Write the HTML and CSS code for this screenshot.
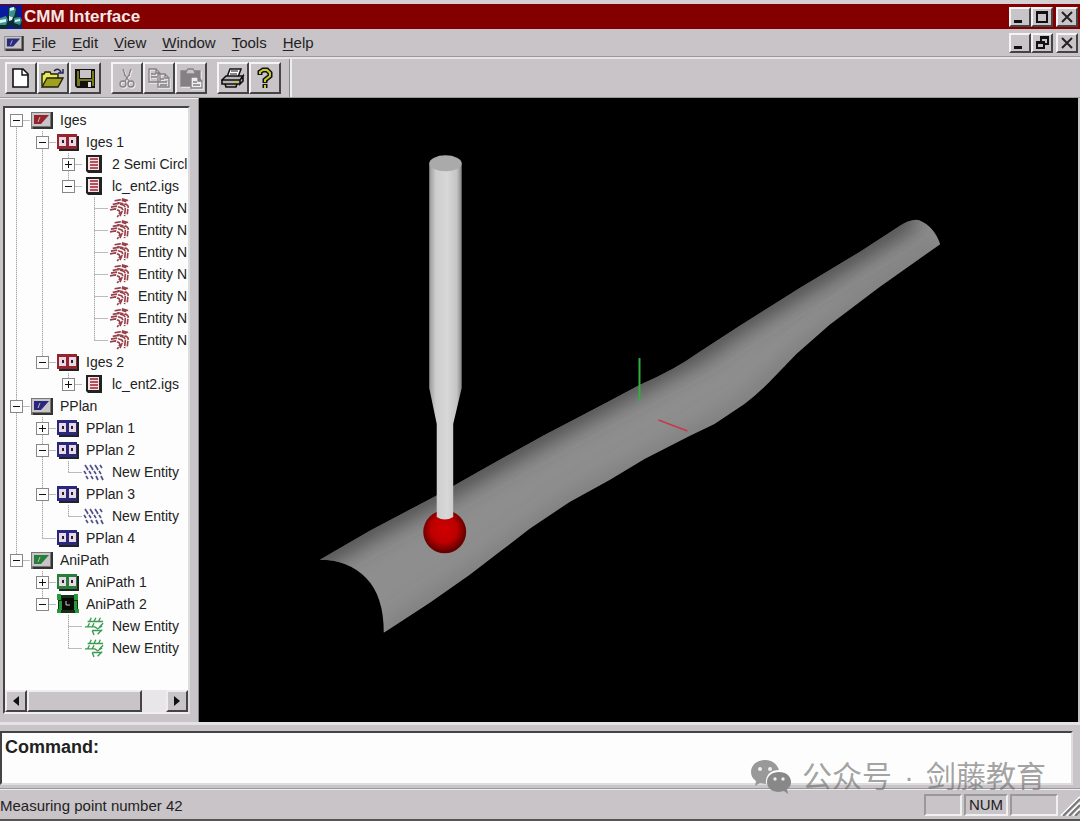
FILE: index.html
```
<!DOCTYPE html>
<html lang="en">
<head>
	<meta charset="utf-8">
	<title>CMM Interface</title>
	<link rel="stylesheet" href="styles.css">
</head>
<body>
	<!-- icon shapes -->
	<svg class="defs" width="0" height="0">
		<symbol id="root" viewBox="0 0 22 18">
			<path fill="#777" d="M0 1h22v17H0z"/><path fill="#c8c4c8" d="M1 2h18v13H1z"/>
			<path fill="#333" d="M20 1h2v17H2v-2h18z"/><path fill="currentColor" d="M3 4h15l-8 9H3z"/>
			<path stroke="#bbb" d="M9 6l-2 5" fill="none"/>
		</symbol>
		<symbol id="group" viewBox="0 0 22 18">
			<path fill="#222" d="M2 3h20v15H2z"/><path fill="currentColor" d="M0 1h20v15H0z"/>
			<path class="pane" d="M2 4h7v9H2zM12 4h7v9h-7z"/><path fill="#222" d="M5 7h2v3H5zM14 7h2v3h-2z"/>
		</symbol>
		<symbol id="doc" viewBox="0 0 22 20">
			<path fill="#222" d="M3 1h16v18H5l-2-2z"/><path fill="#f2e4e4" d="M5 3h11v13H5z"/>
			<path stroke="#a02030" stroke-width="1.6" d="M7 5h8M7 8h8M7 11h8M7 14h8"/>
		</symbol>
		<symbol id="surf" viewBox="0 0 22 22">
			<g fill="none" stroke="#98404a" stroke-width="1.8">
				<path stroke-dasharray="7 1" d="M3 7l6-1 6 2 2 2-1 10M5 3l6-1 7 2M8 5l10 2 2 2-1 9M1 10l6-1 6 2 1 2-3 7M0 13l6-1 4 2 1 2-3 5M13 1l8 2"/>
			</g>
		</symbol>
		<symbol id="points" viewBox="0 0 22 20">
			<path fill="none" stroke="#505088" stroke-width="1.7" d="M2 3l2 3M7 3l2 3M12 3l2 3M17 3l2 3M1 9l2 3M6 9l2 3M11 9l2 3M16 9l2 3M3 14l2 3M8 14l2 3M13 14l2 4M18 14l2 4M4 6l1 2M9 6l1 2M14 6l1 2"/>
		</symbol>
		<symbol id="path" viewBox="0 0 22 22">
			<path fill="none" stroke="#3a9a50" stroke-width="1.5" d="M4 6h17M6 6l2-4M11 6l2-4M16 6l2-4M1 12h11l3 2 5-3M4 12l2-4M9 12l2-4M17 12l4-4M9 16h11M9 16l2 5M15 20l5-5"/>
		</symbol>
		<symbol id="active" viewBox="0 0 22 20">
			<path fill="#163016" d="M1 1h20v18H1z"/><path fill="#279a3c" d="M0 0h4v6H0zM17 0h4v6h-4zM2 7h3v9H2zM17 7h3v9h-3zM0 15h4v4H0zM18 15h4v4h-4z"/>
			<path fill="#080808" d="M5 4h12v12H5z"/><path stroke="#ccc" fill="none" d="M9 7v4h4"/>
		</symbol>
	</svg>

	<div class="window">
		<header class="titlebar">
			<svg class="app-icon" viewBox="0 0 22 24">
				<path fill="#0a1aa0" d="M0 0h22v24H0z"/>
				<path fill="#0c2c34" d="M8 3l7-2 2 3v7l5 3v7l-6 3-5-4-5 4H0v-9l8-4z"/>
				<path fill="#3c9090" d="M9 3l5-1 2 2-2 8-5-1zM0 13l6-2 2 4-2 5H0zM14 13l6-1 2 3-2 5-6-2z"/>
				<path fill="#d8f4f4" d="M10 3l4-1v3l-4 1zM0 15l6-1v3l-6 1zM9 11l4 1-1 3-3 1zM15 15l5-1v2l-5 1z"/>
			</svg>
			<h1 class="title">CMM Interface</h1>
			<div class="caption-buttons">
				<button class="caption" aria-label="Minimize"><svg viewBox="0 0 16 14"><path d="M2 10h8v3H2z"/></svg></button>
				<button class="caption" aria-label="Maximize"><svg viewBox="0 0 16 14"><path fill-rule="evenodd" d="M2 1h12v12H2zM4 4v7h8V4z"/></svg></button>
				<button class="caption close" aria-label="Close"><svg viewBox="0 0 16 14"><path class="cross" d="M3 2l10 10M13 2L3 12"/></svg></button>
			</div>
		</header>

		<nav class="menubar">
			<svg class="doc-icon blue" viewBox="0 0 22 18"><use href="#root"/></svg>
			<button class="menu"><u>F</u>ile</button>
			<button class="menu"><u>E</u>dit</button>
			<button class="menu"><u>V</u>iew</button>
			<button class="menu"><u>W</u>indow</button>
			<button class="menu"><u>T</u>ools</button>
			<button class="menu"><u>H</u>elp</button>
			<div class="caption-buttons">
				<button class="caption" aria-label="Minimize document"><svg viewBox="0 0 16 14"><path d="M2 10h8v3H2z"/></svg></button>
				<button class="caption" aria-label="Restore document"><svg viewBox="0 0 16 14"><path fill-rule="evenodd" d="M6 0h9v9h-4v4H2V5h4zM8 3v2h3v2h2V3zM4 8v3h5V8z"/></svg></button>
				<button class="caption close" aria-label="Close document"><svg viewBox="0 0 16 14"><path class="cross" d="M3 2l10 10M13 2L3 12"/></svg></button>
			</div>
		</nav>

		<div class="toolbar">
			<div class="tools">
				<button class="tool" aria-label="New"><svg viewBox="0 0 24 22"><path fill="#fff" stroke="#111" stroke-width="1.6" d="M4 2h10l5 5v13H4z"/><path fill="none" stroke="#111" stroke-width="1.4" d="M13 2v6h6"/></svg></button>
				<button class="tool" aria-label="Open"><svg viewBox="0 0 24 22"><path fill="#e8e860" stroke="#222200" stroke-width="1.4" d="M1 19V7h2l1-2h5l1 2h7v4"/><path fill="#a0a020" stroke="#222200" stroke-width="1.4" d="M1 20l5-9h16l-5 9z"/><path fill="none" stroke="#222250" stroke-width="1.5" d="M13 4q4-4 7 1M22 2v4h-5"/></svg></button>
				<button class="tool" aria-label="Save"><svg viewBox="0 0 24 22"><path fill="#111" d="M2 2h20v19H4l-2-2z"/><path fill="#77771c" d="M4 4h2v8h13V4h2v15H4z"/><path fill="#c8c4c8" d="M7 3h11v8H7z"/><path fill="#111" d="M7 14h12v6H7z"/><path fill="#ddd" d="M15 15h3v5h-3z"/></svg></button>
			</div>
			<div class="tools">
				<button class="tool" aria-label="Cut"><svg class="off" viewBox="0 0 24 22"><path d="M8 2l2 6 4 6M16 2l-2 6-4 6M9 8l2 1M15 8l-2 1"/><circle cx="8" cy="17" r="3"/><circle cx="16" cy="17" r="3"/></svg></button>
				<button class="tool" aria-label="Copy"><svg class="off" viewBox="0 0 24 22"><path d="M2 2h7l4 4v9H2zM9 2v4h4M4 7h5M4 10h6M11 7h7l4 4v9H11zM18 7v4h4M13 12h4M13 15h7M13 18h7"/></svg></button>
				<button class="tool" aria-label="Paste"><svg class="off" viewBox="0 0 24 22"><path fill="#848084" d="M2 4h19v15H2z"/><path fill="#c8c4c8" d="M7 5l2-3h5l2 3v2H7z"/><path fill="#eee" d="M12 10h7l4 4v7H12zM19 10v4h4M14 15h4M14 18h7"/></svg></button>
			</div>
			<div class="tools">
				<button class="tool" aria-label="Print"><svg viewBox="0 0 24 22"><path fill="#fff" stroke="#111" stroke-width="1.5" d="M6 10l3-8h11l-3 8z"/><path stroke="#111" d="M10 4h7M9 7h7"/><path fill="#b8b4b8" stroke="#111" stroke-width="1.6" d="M1 13l4-4h17l-3 4zM1 13h18v4H1zM19 13l3-4v5l-3 3zM4 17h12l-1 3H5z"/><path stroke="#c8c820" stroke-width="2" d="M13 15h3"/></svg></button>
				<button class="tool" aria-label="Help"><svg viewBox="0 0 24 22"><g fill="none" stroke="#111" stroke-width="5"><path d="M7 8V5l3-2h4l3 3v3l-5 4v3M12 17v4"/></g><g fill="none" stroke="#c8c830" stroke-width="2"><path d="M7 7V5l3-2h4l3 3v3l-5 4v2M12 18v3"/></g></svg></button>
			</div>
		</div>

		<main class="work">
			<aside class="sidebar">
				<div class="tree-box">
					<ul class="tree">
						<li>
							<div class="row"><button class="toggle minus" aria-label="Collapse"></button><svg class="red"><use href="#root"/></svg><span>Iges</span></div>
							<ul>
								<li>
									<div class="row"><button class="toggle minus" aria-label="Collapse"></button><svg class="red"><use href="#group"/></svg><span>Iges 1</span></div>
									<ul>
										<li><div class="row"><button class="toggle plus" aria-label="Expand"></button><svg><use href="#doc"/></svg><span>2 Semi Circl</span></div></li>
										<li>
											<div class="row"><button class="toggle minus" aria-label="Collapse"></button><svg><use href="#doc"/></svg><span>lc_ent2.igs</span></div>
											<ul>
												<li><div class="row"><svg><use href="#surf"/></svg><span>Entity N</span></div></li>
												<li><div class="row"><svg><use href="#surf"/></svg><span>Entity N</span></div></li>
												<li><div class="row"><svg><use href="#surf"/></svg><span>Entity N</span></div></li>
												<li><div class="row"><svg><use href="#surf"/></svg><span>Entity N</span></div></li>
												<li><div class="row"><svg><use href="#surf"/></svg><span>Entity N</span></div></li>
												<li><div class="row"><svg><use href="#surf"/></svg><span>Entity N</span></div></li>
												<li><div class="row"><svg><use href="#surf"/></svg><span>Entity N</span></div></li>
											</ul>
										</li>
									</ul>
								</li>
								<li>
									<div class="row"><button class="toggle minus" aria-label="Collapse"></button><svg class="red"><use href="#group"/></svg><span>Iges 2</span></div>
									<ul>
										<li><div class="row"><button class="toggle plus" aria-label="Expand"></button><svg><use href="#doc"/></svg><span>lc_ent2.igs</span></div></li>
									</ul>
								</li>
							</ul>
						</li>
						<li>
							<div class="row"><button class="toggle minus" aria-label="Collapse"></button><svg class="blue"><use href="#root"/></svg><span>PPlan</span></div>
							<ul>
								<li><div class="row"><button class="toggle plus" aria-label="Expand"></button><svg class="blue"><use href="#group"/></svg><span>PPlan 1</span></div></li>
								<li>
									<div class="row"><button class="toggle minus" aria-label="Collapse"></button><svg class="blue"><use href="#group"/></svg><span>PPlan 2</span></div>
									<ul>
										<li><div class="row"><svg><use href="#points"/></svg><span>New Entity</span></div></li>
									</ul>
								</li>
								<li>
									<div class="row"><button class="toggle minus" aria-label="Collapse"></button><svg class="blue"><use href="#group"/></svg><span>PPlan 3</span></div>
									<ul>
										<li><div class="row"><svg><use href="#points"/></svg><span>New Entity</span></div></li>
									</ul>
								</li>
								<li><div class="row"><svg class="blue"><use href="#group"/></svg><span>PPlan 4</span></div></li>
							</ul>
						</li>
						<li>
							<div class="row"><button class="toggle minus" aria-label="Collapse"></button><svg class="green"><use href="#root"/></svg><span>AniPath</span></div>
							<ul>
								<li><div class="row"><button class="toggle plus" aria-label="Expand"></button><svg class="green"><use href="#group"/></svg><span>AniPath 1</span></div></li>
								<li>
									<div class="row"><button class="toggle minus" aria-label="Collapse"></button><svg><use href="#active"/></svg><span>AniPath 2</span></div>
									<ul>
										<li><div class="row"><svg><use href="#path"/></svg><span>New Entity</span></div></li>
										<li><div class="row"><svg><use href="#path"/></svg><span>New Entity</span></div></li>
									</ul>
								</li>
							</ul>
						</li>
					</ul>
					<div class="scrollbar">
						<button class="scroll-btn" aria-label="Scroll left"><svg viewBox="0 0 10 12"><path d="M8 1v10L2 6z"/></svg></button>
						<div class="thumb"></div>
						<button class="scroll-btn right" aria-label="Scroll right"><svg viewBox="0 0 10 12"><path d="M2 1v10l6-5z"/></svg></button>
					</div>
				</div>
			</aside>

			<!-- 3D view: swept surface, axes and touch probe -->
			<svg class="view" viewBox="199 98 880 624">
				<defs>
					<clipPath id="blade">
						<path d="M320 560L370 531 436 496 480 471 543 436 610 401 640 385Q675 370 700 352L740 326 800 288 860 252 900 226Q913 218 920 220 935 226 941 244L880 287 830 325 797 354 770 382Q757 395 745 404L715 424 690 436 645 459 610 480 570 502 530 529 500 552 470 575 430 603 384 633Q384 596 366 578 348 560 320 560z"/>
					</clipPath>
					<filter id="soft" x="-10%" y="-10%" width="120%" height="120%"><feGaussianBlur stdDeviation="11"/></filter>
					<linearGradient id="steel">
						<stop offset="0" stop-color="#989898"/><stop offset=".2" stop-color="#cdcdcd"/>
						<stop offset=".55" stop-color="#d8d8d8"/><stop offset=".85" stop-color="#c4c4c4"/><stop offset="1" stop-color="#858585"/>
					</linearGradient>
					<radialGradient id="ruby" cx=".48" cy=".45">
						<stop offset="0" stop-color="#d00000"/><stop offset=".6" stop-color="#be0000"/><stop offset="1" stop-color="#680000"/>
					</radialGradient>
				</defs>
				<g clip-path="url(#blade)">
					<path fill="#8e8e8e" d="M300 200h660v450H300z"/>
					<path fill="none" stroke="#404040" stroke-width="20" filter="url(#soft)" d="M300 568L370 528 436 493 543 433 640 381 700 349 740 321 800 285 860 249 915 214"/>
					<path fill="none" stroke="#686868" stroke-width="8" filter="url(#soft)" d="M384 636L470 578 570 505 690 439 745 407 797 357 880 290 945 245"/>
				</g>
				<path stroke="#30b040" stroke-width="2" d="M640 358v43"/>
				<path stroke="#c83848" stroke-width="1.5" d="M659 420l29 11"/>
				<circle cx="445" cy="532" r="21.5" fill="url(#ruby)"/>
				<path fill="url(#steel)" d="M429.500 163V388L437 424V517Q445 522 453.500 517V424L462 388V163z"/>
				<ellipse cx="445.800" cy="163" rx="16.200" ry="8" fill="#aaa"/>
			</svg>
		</main>

		<section class="command">
			<div class="command-box">
				<label for="cmd">Command:</label>
				<input id="cmd" type="text" autocomplete="off">
			</div>
		</section>

		<footer class="status">
			<span class="message">Measuring point number 42</span>
			<span class="cell"></span>
			<span class="cell num">NUM</span>
			<span class="cell wide"></span>
			<svg class="grip" viewBox="0 0 20 20"><path stroke="#fff" stroke-width="2" d="M1 20L20 1M7 20L20 7M13 20l7-7"/><path stroke="#777" stroke-width="2" d="M3 20L20 3M9 20L20 9M15 20l5-5"/></svg>
		</footer>

		<div class="watermark">
			<svg viewBox="0 0 42 34">
				<path fill="#999" d="M14 0C6 0 0 5 0 12c0 4 2 7 5 9l-1 5 5-3 6 1C14 15 20 10 28 10 26 4 21 0 14 0z"/>
				<path fill="#888" d="M28 12c-7 0-12 4-12 10s5 10 12 10l5-1 4 3-1-5c3-2 4-4 4-7 0-6-5-10-12-10z"/>
				<g fill="#eee"><circle cx="9" cy="9" r="2"/><circle cx="19" cy="9" r="2"/><circle cx="24" cy="19" r="1.700"/><circle cx="32" cy="19" r="1.700"/></g>
			</svg>
			<span>公众号</span><span>·</span><span>剑藤教育</span>
		</div>
	</div>
</body>
</html>
```
FILE: styles.css
```
* { box-sizing: border-box; }
body { margin: 0; background: #c8c4c8; color: #222; font: 15px/22px "Liberation Sans", Arial, sans-serif; }
button { font: inherit; color: inherit; padding: 0; border: 0; background: none; }
ul { list-style: none; margin: 0; padding: 0; }
svg { display: block; flex: none; }
.defs { position: absolute; }
.window { position: relative; display: flex; flex-direction: column; min-height: 100vh; border-top: 4px solid #d4d0d4; border-bottom: 2px solid #555; }

/* title bar and menu */
.titlebar { display: flex; align-items: center; height: 25px; background: #840000; padding-right: 2px; }
.app-icon { width: 22px; height: 24px; }
.title { margin: 0 0 0 2px; color: #f4e8e8; font-size: 17px; line-height: 24px; }
.caption-buttons { display: flex; margin-left: auto; }
.caption { width: 22px; height: 20px; background: #c8c4c8; border: 2px solid; border-color: #f4f4f4 #444 #444 #f4f4f4; }
.caption svg { width: 16px; height: 14px; margin: auto; fill: #111; }
.caption.close { margin-left: 3px; }
.cross { fill: none; stroke: #222; stroke-width: 2; }
.menubar { display: flex; align-items: center; gap: 16px; height: 28px; padding: 0 2px; border-bottom: 1px solid #999; }
.doc-icon { width: 20px; height: 16px; margin: 0 -8px 0 2px; }
.menu u { text-underline-offset: 2px; }

/* toolbar */
.toolbar { display: flex; gap: 10px; height: 41px; padding: 3px 0 0 5px; border-top: 2px solid #e6e4e6; border-bottom: 1px solid #999; }
.tools { display: flex; }
.tools:last-child { padding-right: 9px; border-right: 2px solid #eee; margin-top: -3px; padding-top: 3px; box-shadow: inset -1px 0 #888; }
.tool { display: flex; align-items: center; justify-content: center; width: 32px; height: 32px; border: 2px solid; border-color: #f4f4f4 #444 #444 #f4f4f4; }
.tool svg { width: 24px; height: 22px; }
.off { fill: none; stroke: #858185; stroke-width: 1.3; filter: drop-shadow(1px 1px #eee); }

/* tree */
.work { flex: 1; display: flex; min-height: 0; padding-right: 2px; }
.sidebar { display: flex; flex: none; width: 199px; padding: 7px 8px 8px 3px; border-top: 1px solid #eee; border-right: 1px solid #888; }
.tree-box { display: flex; flex-direction: column; flex: 1; min-width: 0; background: #fdfdfd; border: 2px solid; border-color: #444 #ddd #eee #444; }
.tree { flex: 1; overflow: hidden; padding-top: 1px; font-size: 14px; }
.tree ul { padding-left: 26px; }
.tree li { background: repeating-linear-gradient(#aaa 0 1px, #ddd 1px 2px) 11px 0 / 1px 100% no-repeat; }
.tree li:last-child { background-size: 1px 11px; }
.tree > li:first-child { background-position: 11px 11px; }
.row { display: flex; align-items: center; height: 22px; padding-left: 5px; white-space: nowrap; background: linear-gradient(#bbb, #bbb) 11px 11px / 14px 1px no-repeat; }
.toggle { flex: none; width: 13px; height: 13px; margin-right: 8px; border: 1px solid #888; background: #fdfdfd linear-gradient(#111, #111) center / 7px 1px no-repeat; }
.toggle.plus { background: linear-gradient(#111, #111) center / 7px 1px no-repeat, linear-gradient(#111, #111) center / 1px 7px no-repeat, #fdfdfd; }
.row svg { width: 22px; height: 20px; margin-right: 7px; }
.row svg:first-child { margin-left: 21px; }
.red { color: #96242c; }
.blue { color: #28287e; }
.green { color: #268038; }
.pane { fill: #e8d8e8; }
.red .pane { fill: #f0c8c8; }
.scrollbar { display: flex; height: 22px; background: #e8e6e8; }
.scroll-btn, .thumb { background: #c8c4c8; border: 2px solid; border-color: #eee #444 #444 #eee; }
.scroll-btn { width: 22px; }
.scroll-btn svg { width: 10px; height: 12px; margin: auto; fill: #111; }
.scroll-btn.right { margin-left: auto; }
.thumb { width: 63%; }
.view { flex: 1; min-width: 0; background: #000; }

/* command line and status */
.command { padding: 6px 7px 3px 0; border-top: 3px solid #e4e2e4; border-bottom: 1px solid #999; }
.command-box { display: flex; align-items: flex-start; height: 54px; padding: 2px 3px; background: #fdfdfd; border: 2px solid; border-color: #444 #ddd #ddd #444; font-size: 18px; font-weight: bold; line-height: 24px; }
.command-box input { flex: 1; height: 24px; margin-left: 6px; border: 0; outline: 0; background: none; font: inherit; }
.status { display: flex; gap: 2px; height: 30px; padding: 4px 0 3px; border-top: 1px solid #eee; line-height: 24px; }
.message { flex: 1; }
.cell { width: 38px; border: 2px solid; border-color: #999 #f0f0f0 #f0f0f0 #999; text-align: center; line-height: 18px; }
.num { width: 44px; }
.wide { width: 48px; }
.grip { width: 20px; height: 20px; align-self: flex-end; }
.watermark { position: absolute; right: 34px; bottom: 22px; display: flex; align-items: center; gap: 12px; color: rgba(110, 110, 110, .65); font: 30px/40px "Liberation Sans", "Noto Sans CJK SC", sans-serif; pointer-events: none; }
.watermark svg { width: 42px; height: 34px; margin-right: -3px; }
```
